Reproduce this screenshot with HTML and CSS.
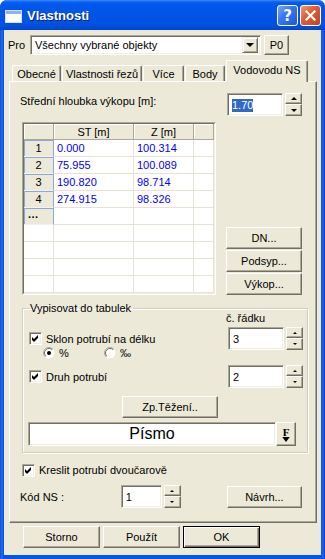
FILE: index.html
```html
<!DOCTYPE html>
<html lang="cs">
<head>
    <meta charset="UTF-8">
    <title>Vlastnosti</title>
    <link rel="stylesheet" href="styles.css">
</head>
<body>
    <div class="window">
        <div class="titlebar">
            <svg class="app-icon" width="17" height="13" viewBox="0 0 17 13">
                <rect x="0.5" y="0.5" width="16" height="12" fill="#fff" stroke="#d6e2fb"/>
                <rect x="1" y="1" width="15" height="3" fill="#8fb2f2"/>
            </svg>
            <span class="title">Vlastnosti</span>
            <div class="caption-buttons">
                <span class="cap-btn help">?</span>
                <span class="cap-btn close">
                    <svg width="11" height="11" viewBox="0 0 11 11"><path d="M1.5 1.5 L9.5 9.5 M9.5 1.5 L1.5 9.5" stroke="#fff" stroke-width="2.2" stroke-linecap="square"/></svg>
                </span>
            </div>
        </div>

        <div class="client">
            <div class="pro-row">
                <span class="pro-label">Pro</span>
                <div class="combo edit">
                    <span class="combo-text">Všechny vybrané objekty</span>
                    <span class="combo-btn"><i class="tri-down big"></i></span>
                </div>
                <div class="btn p0">P0</div>
            </div>

            <div class="tabs">
                <div class="tab t1">Obecné</div>
                <div class="tab t2">Vlastnosti řezů</div>
                <div class="tab t3">Více</div>
                <div class="tab t4">Body</div>
                <div class="tab t5 active">Vodovodu NS</div>
            </div>

            <div class="panel">
                <div class="depth-row">
                    <span class="depth-label">Střední hloubka výkopu [m]:</span>
                    <div class="spin">
                        <div class="edit spin-edit wide"><span class="sel">1.70</span></div>
                        <div class="spin-btns">
                            <span class="spin-btn"><i class="tri-up"></i></span>
                            <span class="spin-btn"><i class="tri-down"></i></span>
                        </div>
                    </div>
                </div>

                <div class="grid-row">
                    <div class="grid-frame">
                        <div class="grid">
                            <div class="gh"></div><div class="gh">ST [m]</div><div class="gh">Z [m]</div><div class="gh"></div>

                            <div class="rh">1</div><div class="gc">0.000</div><div class="gc">100.314</div><div class="gc"></div>
                            <div class="rh">2</div><div class="gc">75.955</div><div class="gc">100.089</div><div class="gc"></div>
                            <div class="rh">3</div><div class="gc">190.820</div><div class="gc">98.714</div><div class="gc"></div>
                            <div class="rh">4</div><div class="gc">274.915</div><div class="gc">98.326</div><div class="gc"></div>
                            <div class="rh more">...</div><div class="gc"></div><div class="gc"></div><div class="gc"></div>

                            <div class="gc"></div><div class="gc"></div><div class="gc"></div><div class="gc"></div>
                            <div class="gc"></div><div class="gc"></div><div class="gc"></div><div class="gc"></div>
                            <div class="gc"></div><div class="gc"></div><div class="gc"></div><div class="gc"></div>
                            <div class="gc"></div><div class="gc"></div><div class="gc"></div><div class="gc"></div>
                        </div>
                    </div>
                    <div class="side-buttons">
                        <div class="btn side-btn">DN...</div>
                        <div class="btn side-btn">Podsyp...</div>
                        <div class="btn side-btn">Výkop...</div>
                    </div>
                </div>

                <fieldset class="group">
                    <legend>Vypisovat do tabulek</legend>
                    <div class="row-no">č. řádku</div>

                    <div class="group-row sklon">
                        <span class="check">
                            <span class="checkbox"><svg width="7" height="7" viewBox="0 0 7 7"><polygon points="0,2 2,4 6,0 6,3 2,7 0,5" fill="#000"/></svg></span>
                            Sklon potrubí na délku
                        </span>
                        <div class="spin">
                            <div class="edit spin-edit">3</div>
                            <div class="spin-btns">
                                <span class="spin-btn"><i class="tri-up small"></i></span>
                                <span class="spin-btn"><i class="tri-down small"></i></span>
                            </div>
                        </div>
                    </div>

                    <div class="radios">
                        <span class="radio">
                            <svg width="12" height="12" viewBox="0 0 12 12">
                                <circle cx="6" cy="6" r="5.5" fill="#fff"/>
                                <path d="M2.1 9.9 A5.5 5.5 0 0 1 9.9 2.1" stroke="#aca899" fill="none"/>
                                <path d="M2.8 9.2 A4.5 4.5 0 0 1 9.2 2.8" stroke="#716f64" fill="none"/>
                                <circle cx="6" cy="6" r="2" fill="#000"/>
                            </svg>
                            %
                        </span>
                        <span class="radio permille">
                            <svg width="12" height="12" viewBox="0 0 12 12">
                                <circle cx="6" cy="6" r="5.5" fill="#fff"/>
                                <path d="M2.1 9.9 A5.5 5.5 0 0 1 9.9 2.1" stroke="#aca899" fill="none"/>
                                <path d="M2.8 9.2 A4.5 4.5 0 0 1 9.2 2.8" stroke="#716f64" fill="none"/>
                            </svg>
                            ‰
                        </span>
                    </div>

                    <div class="group-row druh">
                        <span class="check">
                            <span class="checkbox"><svg width="7" height="7" viewBox="0 0 7 7"><polygon points="0,2 2,4 6,0 6,3 2,7 0,5" fill="#000"/></svg></span>
                            Druh potrubí
                        </span>
                        <div class="spin">
                            <div class="edit spin-edit">2</div>
                            <div class="spin-btns">
                                <span class="spin-btn"><i class="tri-up small"></i></span>
                                <span class="spin-btn"><i class="tri-down small"></i></span>
                            </div>
                        </div>
                    </div>

                    <div class="btn tezeni">Zp.Těžení..</div>

                    <div class="font-row">
                        <div class="edit font-field">Písmo</div>
                        <div class="btn font-btn"><span class="f-letter">F</span><i class="tri-down tiny"></i></div>
                    </div>
                </fieldset>

                <span class="check kreslit">
                    <span class="checkbox"><svg width="7" height="7" viewBox="0 0 7 7"><polygon points="0,2 2,4 6,0 6,3 2,7 0,5" fill="#000"/></svg></span>
                    Kreslit potrubí dvoučarově
                </span>

                <div class="kod-row">
                    <span class="kod-label">Kód NS :</span>
                    <div class="spin">
                        <div class="edit spin-edit narrow">1</div>
                        <div class="spin-btns">
                            <span class="spin-btn"><i class="tri-up small"></i></span>
                            <span class="spin-btn"><i class="tri-down small"></i></span>
                        </div>
                    </div>
                    <div class="btn navrh">Návrh...</div>
                </div>
            </div>

            <div class="dialog-buttons">
                <div class="btn dlg-btn">Storno</div>
                <div class="btn dlg-btn">Použít</div>
                <div class="btn dlg-btn default">OK</div>
            </div>
        </div>
    </div>
</body>
</html>
```

FILE: styles.css
```css
* {
    box-sizing: border-box;
}

body {
    margin: 0;
    background: #fff;
    font-family: "Liberation Sans", Arial, sans-serif;
    font-size: 11px;
    color: #000;
}

.window {
    width: 325px;
    height: 559px;
    display: flex;
    flex-direction: column;
    background: linear-gradient(to right, #0a4ad8 0, #2a74f0 2px, #0656e6 3px, #0656e6 321px, #1c62e8 323px, #0a3fcc 325px);
    border-radius: 7px 7px 0 0;
    overflow: hidden;
}

/* title bar */
.titlebar {
    height: 30px;
    flex: none;
    display: flex;
    align-items: center;
    padding: 0 4px 0 5px;
    background: linear-gradient(to bottom, #3d8cfb 0, #0c60ec 2px, #0058ee 4px, #0055e6 14px, #0053e2 24px, #004ad8 28px, #0042cc 30px);
}

.app-icon {
    margin-top: 2px;
}

.title {
    margin-left: 5px;
    color: #fff;
    font-weight: bold;
    font-size: 13px;
    text-shadow: 1px 1px 0 #0a1e80;
    flex: 1;
}

.caption-buttons {
    display: flex;
    gap: 2px;
    margin-top: 1px;
}

.cap-btn {
    width: 21px;
    height: 21px;
    border: 1px solid #fff;
    border-radius: 3px;
    display: flex;
    align-items: center;
    justify-content: center;
    color: #fff;
}

.help {
    background: linear-gradient(135deg, #7aa7f8 0, #3b77ee 40%, #1d58de 100%);
    font-weight: bold;
    font-size: 15px;
    font-family: "DejaVu Sans", sans-serif;
}

.close {
    background: linear-gradient(135deg, #f09a78 0, #e35d33 40%, #c9431c 100%);
}

/* client area */
.client {
    flex: 1;
    margin: 0 4px 4px;
    background: #ece9d8;
    display: flex;
    flex-direction: column;
}

.pro-row {
    display: flex;
    align-items: center;
    height: 20px;
    margin-top: 5px;
    padding-left: 4px;
}

.pro-label {
    width: 22px;
}

/* common widgets */
.edit {
    background: #fff;
    border-top: 1px solid #aca899;
    border-left: 1px solid #aca899;
    border-right: 1px solid #fff;
    border-bottom: 1px solid #fff;
    box-shadow: inset 1px 1px 0 #716f64, inset -1px -1px 0 #f1efe2;
}

.btn {
    background: #ece9d8;
    border-top: 1px solid #fff;
    border-left: 1px solid #fff;
    border-right: 1px solid #716f64;
    border-bottom: 1px solid #716f64;
    box-shadow: inset -1px -1px 0 #aca899;
    display: flex;
    align-items: center;
    justify-content: center;
}

.combo {
    width: 231px;
    height: 20px;
    display: flex;
    align-items: center;
    padding: 2px 2px 2px 4px;
}

.combo-text {
    flex: 1;
}

.combo-btn {
    width: 16px;
    height: 16px;
    background: #ece9d8;
    border-top: 1px solid #f1efe2;
    border-left: 1px solid #f1efe2;
    border-right: 1px solid #716f64;
    border-bottom: 1px solid #716f64;
    box-shadow: inset 1px 1px 0 #fff, inset -1px -1px 0 #aca899;
    display: flex;
    align-items: center;
    justify-content: center;
}

.p0 {
    width: 25px;
    height: 20px;
    margin-left: 3px;
}

.tri-up,
.tri-down {
    display: block;
    width: 0;
    height: 0;
    border-left: 3px solid transparent;
    border-right: 3px solid transparent;
}

.tri-up {
    border-bottom: 3px solid #000;
}

.tri-down {
    border-top: 3px solid #000;
}

.tri-down.big {
    border-left-width: 4px;
    border-right-width: 4px;
    border-top-width: 4px;
}

.tri-up.small {
    border-left-width: 2px;
    border-right-width: 2px;
    border-bottom-width: 2px;
}

.tri-down.small {
    border-left-width: 2px;
    border-right-width: 2px;
    border-top-width: 2px;
}

/* tabs */
.tabs {
    display: flex;
    align-items: flex-end;
    gap: 1px;
    height: 21px;
    margin-top: 5px;
    padding-left: 8px;
}

.tab {
    height: 16px;
    display: flex;
    align-items: center;
    justify-content: center;
    border-top: 1px solid #fff;
    border-left: 1px solid #fff;
    border-right: 1px solid #716f64;
    box-shadow: inset -1px 0 0 #aca899;
    border-radius: 2px 2px 0 0;
    padding-top: 1px;
}

.t1 { width: 49px; }
.t2 { width: 80px; }
.t3 { width: 41px; }
.t4 { width: 40px; }

.tab.active {
    width: 82px;
    height: 22px;
    margin-bottom: -1px;
    background: #ece9d8;
    position: relative;
    z-index: 1;
    padding-top: 0;
    padding-bottom: 3px;
}

.panel {
    height: 442px;
    width: 308px;
    margin-left: 5px;
    border-top: 1px solid #fff;
    border-left: 1px solid #fff;
    border-right: 1px solid #716f64;
    border-bottom: 1px solid #716f64;
    box-shadow: inset -1px -1px 0 #aca899;
    padding: 11px 14px 0 10px;
    display: flex;
    flex-direction: column;
}

.depth-row {
    display: flex;
    height: 23px;
}

.depth-label {
    flex: 1;
    padding-top: 2px;
}

.spin {
    display: flex;
    gap: 2px;
}

.spin-edit {
    width: 56px;
    height: 23px;
    padding: 5px 0 0 4px;
}

.spin-edit.narrow {
    width: 41px;
}

.sel {
    background: #316ac5;
    color: #fff;
    padding: 0 0 1px;
}

.spin-btns {
    width: 17px;
    display: flex;
    flex-direction: column;
}

.spin-btn {
    height: 11px;
    background: #ece9d8;
    border-top: 1px solid #fff;
    border-left: 1px solid #fff;
    border-right: 1px solid #716f64;
    border-bottom: 1px solid #716f64;
    box-shadow: inset -1px -1px 0 #aca899;
    display: flex;
    align-items: center;
    justify-content: center;
}

.spin-btn + .spin-btn {
    height: 12px;
}

/* data grid */
.grid-row {
    display: flex;
    align-items: flex-end;
    margin-top: 6px;
    margin-left: 2px;
}

.grid-frame {
    width: 195px;
    border-top: 1px solid #aca899;
    border-left: 1px solid #aca899;
    border-right: 1px solid #fff;
    border-bottom: 1px solid #fff;
}

.grid {
    display: grid;
    grid-template-columns: 30px 80px 60px 1fr;
    grid-template-rows: 16px;
    grid-auto-rows: 17px;
    border-top: 1px solid #716f64;
    border-left: 1px solid #716f64;
    border-right: 1px solid #f1efe2;
    border-bottom: 1px solid #f1efe2;
    background: #fff;
}

.gh {
    background: #ece9d8;
    border-right: 1px solid #aca899;
    border-bottom: 1px solid #aca899;
    box-shadow: inset 1px 1px 0 #fff;
    display: flex;
    align-items: center;
    justify-content: center;
}

.gc {
    border-right: 1px solid #e6e3d4;
    border-bottom: 1px solid #e6e3d4;
    color: #0000ff;
    padding: 2px 0 0 3px;
}

.rh {
    background: #ece9d8;
    border-right: 1px solid #8ea6dc;
    border-bottom: 1px solid #f4f3ea;
    box-shadow: inset 1px 1px 0 #8ea6dc;
    display: flex;
    align-items: center;
    justify-content: center;
}

.rh.more {
    font-weight: bold;
    justify-content: flex-start;
    padding: 0 0 4px 4px;
    letter-spacing: 0.5px;
}

.side-buttons {
    display: flex;
    flex-direction: column;
    gap: 1px;
    margin-left: 10px;
}

.side-btn {
    width: 76px;
    height: 22px;
}

/* group box */
.group {
    margin: 7px 0 0 2px;
    width: 286px;
    padding: 0 4px 6px 5px;
    border: 1px solid #d0d0bf;
    box-shadow: inset 1px 1px 0 #fff, 1px 1px 0 #fff;
    min-width: 0;
}

.group legend {
    padding: 0 2px 0 1px;
    margin-left: 1px;
    line-height: 13px;
}

.row-no {
    margin: -3px 0 0 198px;
    line-height: 12px;
}

.group-row {
    display: flex;
    align-items: center;
    justify-content: space-between;
}

.group-row.sklon {
    margin-top: 3px;
}

.group-row.druh {
    margin-top: 6px;
}

.check {
    display: flex;
    align-items: center;
    gap: 4px;
    margin-left: 1px;
}

.checkbox {
    width: 13px;
    height: 13px;
    background: #fff;
    border-top: 1px solid #aca899;
    border-left: 1px solid #aca899;
    border-right: 1px solid #fff;
    border-bottom: 1px solid #fff;
    box-shadow: inset 1px 1px 0 #716f64, inset -1px -1px 0 #f1efe2;
    display: flex;
    align-items: center;
    justify-content: center;
}

.radios {
    display: flex;
    height: 12px;
    margin-top: -3px;
    padding-left: 15px;
}

.radio {
    display: flex;
    align-items: center;
    gap: 4px;
    width: 61px;
}

.tezeni {
    width: 96px;
    height: 22px;
    margin: 8px 0 0 94px;
}

.font-row {
    display: flex;
    margin-top: 4px;
}

.font-field {
    width: 248px;
    height: 24px;
    display: flex;
    align-items: center;
    justify-content: center;
    font-size: 16px;
}

.font-btn {
    width: 20px;
    height: 24px;
    flex-direction: column;
    gap: 1px;
}

.f-letter {
    font-family: "Liberation Serif", serif;
    font-weight: bold;
    font-size: 11px;
    line-height: 10px;
    text-decoration: underline;
}

.tri-down.tiny {
    border-left-width: 3px;
    border-right-width: 3px;
    border-top-width: 4px;
}

.kreslit {
    margin: 10px 0 0 2px;
    height: 14px;
}

.kod-row {
    display: flex;
    align-items: center;
    margin-top: 8px;
}

.kod-label {
    width: 102px;
}

.navrh {
    width: 76px;
    height: 22px;
    margin-left: 46px;
}

/* dialog buttons */
.dialog-buttons {
    display: flex;
    gap: 3px;
    margin: 3px 0 0 19px;
}

.dlg-btn {
    width: 77px;
    height: 22px;
}

.dlg-btn.default {
    border: 1px solid #000;
    box-shadow: inset 1px 1px 0 #fff, inset -1px -1px 0 #716f64, inset -2px -2px 0 #aca899;
}
```
